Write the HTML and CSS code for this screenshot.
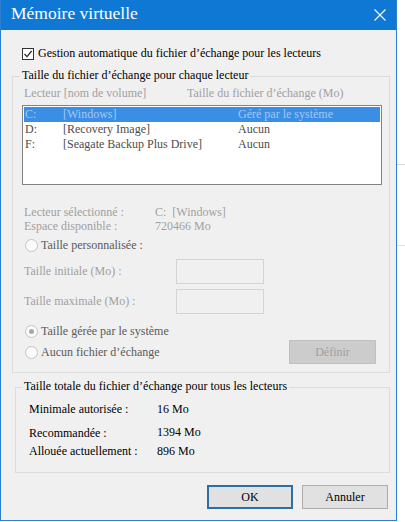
FILE: index.html
```html
<!DOCTYPE html>
<html>
<head>
<meta charset="utf-8">
<link rel="stylesheet" href="styles.css">
</head>
<body>
<div class="dialog">
  <div class="titlebar">
    <span class="title">Mémoire virtuelle</span>
    <svg class="close" width="12" height="12" viewBox="0 0 12 12"><path d="M0.5 0.5 L11.5 11.5 M11.5 0.5 L0.5 11.5" stroke="#fff" stroke-width="1.1" fill="none"/></svg>
  </div>
  <div class="content">
    <div class="check-row">
      <span class="checkbox"><svg width="10" height="10" viewBox="0 0 10 10"><path d="M1.5 5 L4 7.6 L8.6 2" stroke="#222" stroke-width="1.2" fill="none"/></svg></span>
      <span>Gestion automatique du fichier d’échange pour les lecteurs</span>
    </div>

    <div class="group g1">
      <div class="legend">Taille du fichier d’échange pour chaque lecteur</div>
      <div class="cols muted"><span class="col-a">Lecteur [nom de volume]</span><span>Taille du fichier d’échange (Mo)</span></div>
      <div class="listbox">
        <div class="row selected"><span class="c1">C:</span><span class="c2">[Windows]</span><span>Géré par le système</span></div>
        <div class="row"><span class="c1">D:</span><span class="c2">[Recovery Image]</span><span>Aucun</span></div>
        <div class="row"><span class="c1">F:</span><span class="c2">[Seagate Backup Plus Drive]</span><span>Aucun</span></div>
      </div>
      <div class="info info-first muted"><span class="info-label">Lecteur sélectionné :</span><span>C:&nbsp; [Windows]</span></div>
      <div class="info muted"><span class="info-label">Espace disponible :</span><span>720466 Mo</span></div>
      <div class="radio-row r-custom"><span class="radio"></span><span>Taille personnalisée :</span></div>
      <div class="field f1"><span class="field-label muted">Taille initiale (Mo) :</span><span class="input"></span></div>
      <div class="field f2"><span class="field-label muted">Taille maximale (Mo) :</span><span class="input"></span></div>
      <div class="radio-row r-system"><span class="radio checked"></span><span>Taille gérée par le système</span></div>
      <div class="last-row">
        <div class="radio-row"><span class="radio"></span><span>Aucun fichier d’échange</span></div>
        <button class="btn btn-disabled" type="button">Définir</button>
      </div>
    </div>

    <div class="group g2">
      <div class="legend">Taille totale du fichier d’échange pour tous les lecteurs</div>
      <div class="stat s1"><span class="stat-label">Minimale autorisée :</span><span>16 Mo</span></div>
      <div class="stat s2"><span class="stat-label s2-label">Recommandée :</span><span>1394 Mo</span></div>
      <div class="stat s3"><span class="stat-label">Allouée actuellement :</span><span>896 Mo</span></div>
    </div>

    <div class="actions">
      <button class="btn btn-default" type="button">OK</button>
      <button class="btn" type="button">Annuler</button>
    </div>
  </div>
</div>
</body>
</html>
```

FILE: styles.css
```css
* { box-sizing: border-box; }

body {
  margin: 0;
  width: 405px;
  height: 522px;
  overflow: hidden;
  background-color: #ffffff;
  background-image:
    linear-gradient(#d9d9d9, #d9d9d9),
    linear-gradient(#e2e2e2, #e2e2e2);
  background-size: 100% 1px, 100% 1px;
  background-position: 0 164px, 0 245px;
  background-repeat: no-repeat;
  font-family: "Liberation Serif", "Times New Roman", serif;
  font-size: 12px;
  color: #000;
}

.dialog {
  width: 397px;
  height: 521px;
  border: 1px solid #2b7fd0;
  border-top: 0;
  background: #f0f0f0;
  display: flex;
  flex-direction: column;
}

.titlebar {
  height: 30px;
  flex: none;
  background: #0f78d4;
  color: #fff;
  display: flex;
  align-items: center;
  justify-content: space-between;
  padding: 0 10px 3px 10px;
  font-size: 17.5px;
}

.close { margin-top: 2px; }

.content {
  display: flex;
  flex-direction: column;
  padding: 0 6px 0 11px;
}

.check-row {
  margin-top: 16px;
  margin-left: 10px;
  height: 15px;
  display: flex;
  align-items: center;
}

.checkbox {
  width: 12px;
  height: 12px;
  border: 1px solid #333;
  background: #fff;
  margin-right: 4px;
  display: flex;
  align-items: center;
  justify-content: center;
}

.group {
  border: 1px solid #dcdcdc;
  display: flex;
  flex-direction: column;
}

.g1 {
  margin-top: 15px;
  padding: 0 7px 8px 9px;
}

.g2 {
  margin-top: 14px;
  margin-left: 3px;
  padding: 0 7px 14px 13px;
}

.legend {
  margin-top: -9px;
  line-height: 14px;
  align-self: flex-start;
  background: #f0f0f0;
  padding: 0 2px;
  margin-left: -2px;
}

.g2 .legend { margin-left: -7px; }

.muted { color: #a0a0a0; }

.cols {
  margin-top: 4px;
  line-height: 14px;
  padding-left: 2px;
  display: flex;
}

.col-a { width: 163px; }

.listbox {
  margin-top: 5px;
  height: 80px;
  border: 1px solid #828282;
  background: #fff;
  padding: 1px;
}

.row {
  height: 15px;
  line-height: 15px;
  display: flex;
  padding-left: 1px;
  color: #4d4d4d;
}

.row.selected {
  background: #3a8ee6;
  color: #a3c8f0;
}

.c1 { width: 38px; }
.c2 { width: 175px; }

.info {
  display: flex;
  line-height: 14px;
  padding-left: 2px;
}

.info-first { margin-top: 20px; }

.info-label { width: 131px; }

.radio-row {
  display: flex;
  align-items: center;
  line-height: 14px;
  padding-left: 3px;
  color: #5a5a5a;
}

.r-custom { margin-top: 5px; }
.r-system { margin-top: 10px; }

.radio {
  width: 13px;
  height: 13px;
  border-radius: 50%;
  border: 1px solid #c4c4c4;
  background: #fbfbfb;
  margin-right: 3px;
  display: flex;
  align-items: center;
  justify-content: center;
}

.radio.checked::after {
  content: "";
  width: 5px;
  height: 5px;
  border-radius: 50%;
  background: #a8a8a8;
}

.field {
  display: flex;
  align-items: center;
  height: 25px;
  padding-left: 2px;
}

.f1 { margin-top: 7px; }
.f2 { margin-top: 5px; }

.field-label { width: 152px; }

.input {
  width: 88px;
  height: 25px;
  border: 1px solid #d4d4d4;
  background: #f0f0f0;
}

.last-row {
  margin-top: 2px;
  height: 24px;
  display: flex;
  align-items: center;
  justify-content: space-between;
}

.btn {
  width: 86px;
  height: 24px;
  border: 1px solid #adadad;
  background: #e1e1e1;
  font-family: "Liberation Serif", "Times New Roman", serif;
  font-size: 12px;
  color: #000;
  padding: 0;
}

.btn-disabled {
  width: 87px;
  margin-right: 6px;
  background: #cccccc;
  border-color: #bfbfbf;
  color: #a0a0a0;
}

.btn-default {
  border: 2px solid #2c6fa6;
}

.stat {
  display: flex;
  line-height: 14px;
}

.s1 { margin-top: 9px; }
.s2 { margin-top: 9px; }
.s3 { margin-top: 5px; }

.stat-label { width: 128px; }
.s2-label { position: relative; top: 1px; }

.actions {
  margin-top: 12px;
  display: flex;
  justify-content: flex-end;
  gap: 9px;
  padding-right: 2px;
}
```
